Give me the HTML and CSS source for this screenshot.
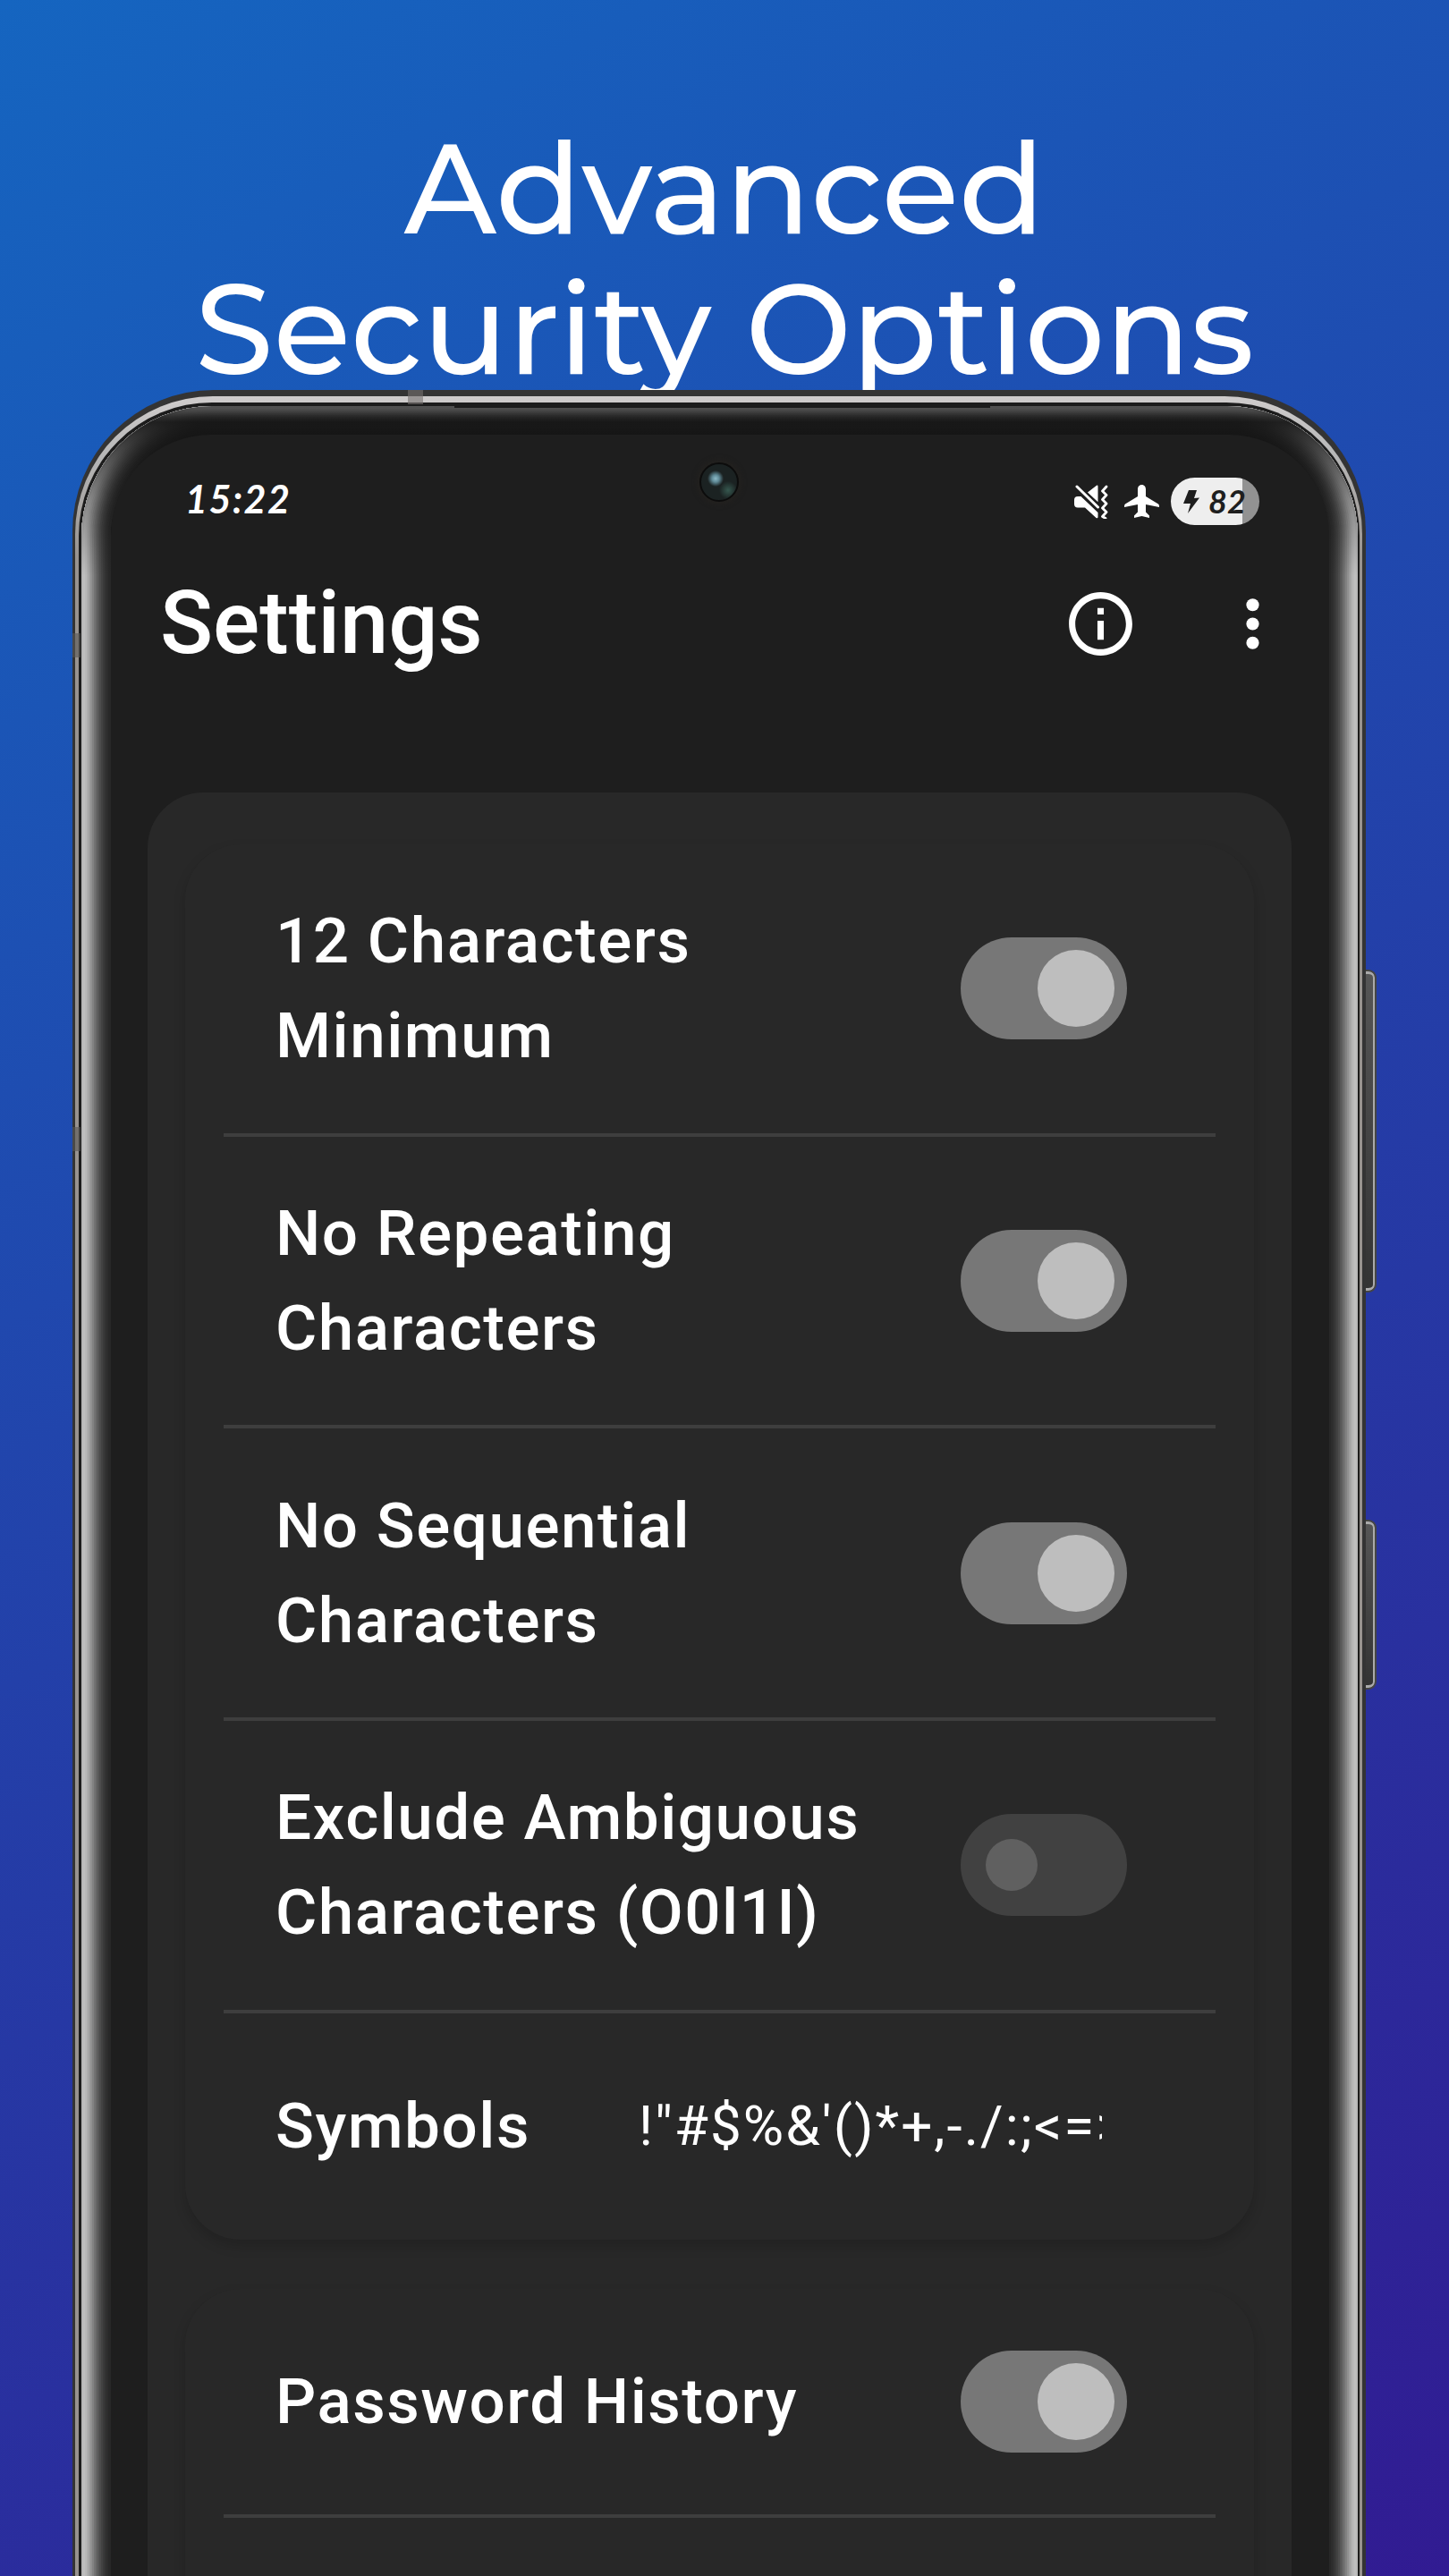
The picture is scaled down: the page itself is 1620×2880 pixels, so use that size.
FILE: index.html
```html
<!DOCTYPE html>
<html lang="en">
<head>
<meta charset="utf-8">
<title>Advanced Security Options</title>
<link rel="stylesheet" href="styles.css">
</head>
<body>
<main class="poster">
  <h1 class="headline">
    <span class="headline-line line-one">Advanced</span>
    <span class="headline-line line-two">Security Options</span>
  </h1>
  <div class="phone">
    <i class="band band-top"></i><i class="band band-left"></i><i class="band band-lower"></i>
    <i class="key key-volume"></i><i class="key key-power"></i>
    <div class="rim"><div class="groove"><div class="bezel">
      <i class="earpiece"></i>
      <div class="screen">
        <i class="camera"></i>
        <div class="status">
          <span class="time">15:22</span>
          <div class="status-icons">
            <svg class="mute" viewBox="0 0 38 38" fill="#fff"><path d="M0 17q0-4 4-4h3.500L26.500 31v5q0 2-2 1L12 25.500H4q-4 0-4-4zM15 8.500 25 .8q1.500-.8 1.500 1v17.500z"/><path d="M3 2 26.500 25" stroke="#fff" stroke-width="3" stroke-linecap="round"/><path d="m36 2-4.500 5 4.500 4.500-4.500 5 4.500 4.500-4.500 5 4.500 4.500-4.500 5 3.500 2" fill="none" stroke="#fff" stroke-width="2.800" stroke-linecap="round" stroke-linejoin="round"/></svg>
            <svg class="plane" viewBox="0 0 39 38" fill="#fff"><path d="M19.500 0c3 0 4.500 2.500 4.500 5v8l14 8.500q1 .8 1 2.500v1L24 22v8.500l4 4V37l-8.500-2-8.500 2v-2.500l4-4V22L0 25v-1q0-1.700 1-2.500L15 13V5c0-2.500 1.500-5 4.500-5z"/></svg>
            <div class="battery">
              <svg class="bolt" viewBox="0 0 18 28"><path d="M6 1h9l-3 9 6-.5L5 27l3-11H0z" fill="#1e1e1e"/></svg>
              <span class="level">82</span>
            </div>
          </div>
        </div>
        <header class="app-bar">
          <h2 class="title">Settings</h2>
          <div class="actions">
            <svg class="icon" viewBox="0 0 24 24" fill="#fff"><path d="M11 7h2v2h-2zm0 4h2v6h-2zm1-9C6.480 2 2 6.480 2 12s4.480 10 10 10 10-4.480 10-10S17.520 2 12 2zm0 18c-4.410 0-8-3.590-8-8s3.590-8 8-8 8 3.590 8 8-3.590 8-8 8z"/></svg>
            <svg class="icon" viewBox="0 0 24 24" fill="#fff"><circle cx="12" cy="6" r="2"/><circle cx="12" cy="12" r="2"/><circle cx="12" cy="18" r="2"/></svg>
          </div>
        </header>
        <section class="panel">
          <div class="card">
            <div class="row"><span class="label">12 Characters<br>Minimum</span><span class="toggle on"></span></div>
            <div class="row"><span class="label">No Repeating<br>Characters</span><span class="toggle on"></span></div>
            <div class="row"><span class="label">No Sequential<br>Characters</span><span class="toggle on"></span></div>
            <div class="row"><span class="label">Exclude Ambiguous<br>Characters (O0l1I)</span><span class="toggle"></span></div>
            <div class="row short"><span class="label">Symbols</span><span class="symbols">!"#$%&amp;'()*+,-./:;&lt;=&gt;</span></div>
          </div>
          <div class="card">
            <div class="row short"><span class="label">Password History</span><span class="toggle on"></span></div>
            <div class="row short"></div>
          </div>
        </section>
      </div>
    </div></div></div>
  </div>
</main>
</body>
</html>
```
FILE: styles.css
```css
* { box-sizing: border-box; }
html, body { margin: 0; }
body { font-family: Roboto, "Liberation Sans", sans-serif; color: #fff; }

.poster {
  width: 1620px;
  height: 2880px;
  overflow: hidden;
  background: linear-gradient(151deg, #1565c0, #311b92);
}

.headline {
  height: 436px;
  margin: 0;
  padding-top: 132px;
  display: flex;
  flex-direction: column;
  align-items: center;
  font: 500 141px/157px Montserrat, Inter, sans-serif;
  white-space: nowrap;
}
.headline-line { display: block; }

/* phone body: dark shell, polished rim, groove, curved glass */
.phone {
  position: relative;
  z-index: 0;
  width: 1446px;
  height: 2600px;
  margin-left: 81px;
  padding: 7px 4px 0 3px;
  border-radius: 158px 158px 0 0;
  background: #343434;
}
.rim {
  height: 100%;
  padding: 7px 3px 0 4px;
  border-radius: 154px 154px 0 0;
  background: linear-gradient(#cfcccc 0, #b9b9b9 60px, #98938f 180px);
}
.groove {
  height: 100%;
  padding: 4px 2px 0 3px;
  border-radius: 149px 149px 0 0;
  background: #1c1c1c;
}
.bezel {
  position: relative;
  height: 100%;
  padding: 32px 32px 0 33px;
  border-radius: 146px 146px 0 0;
  background: #151515;
  box-shadow:
    inset 0 0 0 2px #b8b8b8, inset 0 0 0 4px #bfbfbf, inset 0 0 0 6px #b9b9b9,
    inset 0 0 0 8px #aeaeae, inset 0 0 0 10px #a0a0a0, inset 0 0 0 12px #919191,
    inset 0 0 0 14px #828282, inset 0 0 0 16px #737373, inset 0 0 0 18px #656565,
    inset 0 0 0 20px #585858, inset 0 0 0 22px #4c4c4c, inset 0 0 0 24px #424242,
    inset 0 0 0 26px #3a3a3a, inset 0 0 0 28px #323232, inset 0 0 0 30px #2d2d2d,
    inset 0 0 0 33px #282828;
}
.bezel::before {
  content: "";
  position: absolute;
  inset: 0 0 auto;
  height: 190px;
  border-radius: 146px 146px 0 0;
  background: linear-gradient(rgba(18,18,18,.6) 0, rgba(18,18,18,.7) 6px, rgba(18,18,18,.83) 12px,
    rgba(18,18,18,.92) 18px, rgba(18,18,18,.82) 32px, rgba(18,18,18,.6) 62px,
    rgba(18,18,18,.32) 105px, rgba(18,18,18,0) 190px);
}
.earpiece {
  position: absolute;
  top: -1px;
  left: 417px;
  width: 599px;
  height: 3px;
  background: #1c1c1c;
}
.band { position: absolute; background: rgba(118, 114, 112, .6); z-index: 1; }
.band-top { left: 375px; top: 0; width: 17px; height: 16px; }
.band-left { left: 0; top: 272px; width: 9px; height: 27px; background: rgba(90, 88, 86, .6); }
.band-lower { left: 0; top: 824px; width: 9px; height: 27px; background: rgba(90, 88, 86, .6); }
.key {
  position: absolute;
  left: 1444px;
  width: 13px;
  border: 2px solid #454545;
  border-left: 0;
  border-radius: 0 9px 9px 0;
  background: linear-gradient(#565656, #333);
  box-shadow: inset -2px 0 0 #aaa, inset 0 3px 0 #aaa, inset 0 -3px 0 #aaa;
}
.key-volume { top: 648px; height: 361px; }
.key-power { top: 1263px; height: 190px; }
.rim { position: relative; }
.key { clip-path: inset(0 0 0 2px); width: 14px; }

.screen {
  position: relative;
  height: 100%;
  border-radius: 112px 112px 0 0;
  background: #1e1e1e;
}
.camera {
  position: absolute;
  left: 658px;
  top: 31px;
  width: 44px;
  height: 44px;
  border: 2px solid #0c0c0c;
  border-radius: 50%;
  background:
    radial-gradient(circle at 16px 16px, #8db9c6 0, #5f8a97 4px, transparent 9px),
    radial-gradient(circle at 30px 29px, #36584f 0, transparent 10px),
    #1b2222;
  box-shadow: 0 0 6px 2px #24221f;
}
.status {
  height: 149px;
  padding: 0 78px 0 83px;
  display: flex;
  align-items: center;
  justify-content: space-between;
}
.time { padding-bottom: 5px; font: italic 700 43px/50px Lato, sans-serif; letter-spacing: 1.500px; }
.status-icons { display: flex; align-items: center; }
.mute { width: 38px; height: 38px; margin-right: 18px; }
.plane { width: 39px; height: 38px; margin-right: 13px; }
.battery {
  display: flex;
  align-items: center;
  gap: 10px;
  width: 99px;
  height: 53px;
  padding-left: 14px;
  border-radius: 27px;
  background: linear-gradient(90deg, #eee 80px, #929292 80px);
}
.bolt { width: 18px; height: 28px; }
.level { font: italic 700 36px/51px Lato, sans-serif; color: #1e1e1e; }

.app-bar {
  height: 125px;
  padding: 0 43px 0 55px;
  display: flex;
  align-items: center;
  justify-content: space-between;
}
.title { margin: 0; font-size: 97.500px; font-weight: 500; line-height: 125px; }
.actions { display: flex; gap: 85px; }
.icon { width: 85px; height: 85px; }

.panel {
  height: 2200px;
  margin: 126px 42px 0 41px;
  padding: 58px 42px;
  border-radius: 62px 62px 0 0;
  background: #282828;
}
.card {
  margin-bottom: 55px;
  padding: 0 43px;
  border-radius: 62px;
  background: #282828;
  box-shadow: 0 7px 13px 1px rgba(0, 0, 0, .15);
}
.row {
  height: 326.700px;
  padding: 0 99px 0 58px;
  display: flex;
  align-items: center;
  justify-content: space-between;
  border-bottom: 4px solid #3e3e3e;
}
.row.short { height: 256px; }
.row.short:last-child { height: 253px; border-bottom: 0; }
.label { font-size: 71px; font-weight: 500; line-height: 106px; letter-spacing: 1.500px; white-space: nowrap; }
.symbols {
  width: 518px;
  margin-right: 28px;
  overflow: hidden;
  font-size: 62px;
  line-height: 90px;
  letter-spacing: 2px;
  white-space: nowrap;
}
.toggle {
  width: 186px;
  height: 114px;
  padding: 0 28px;
  display: flex;
  align-items: center;
  border-radius: 57px;
  background: #414141;
}
.toggle::before {
  content: "";
  width: 58px;
  height: 58px;
  border-radius: 50%;
  background: #606060;
}
.toggle.on { padding: 0 14px; justify-content: flex-end; background: #777; }
.toggle.on::before { width: 86px; height: 86px; background: #bebebe; }
```
